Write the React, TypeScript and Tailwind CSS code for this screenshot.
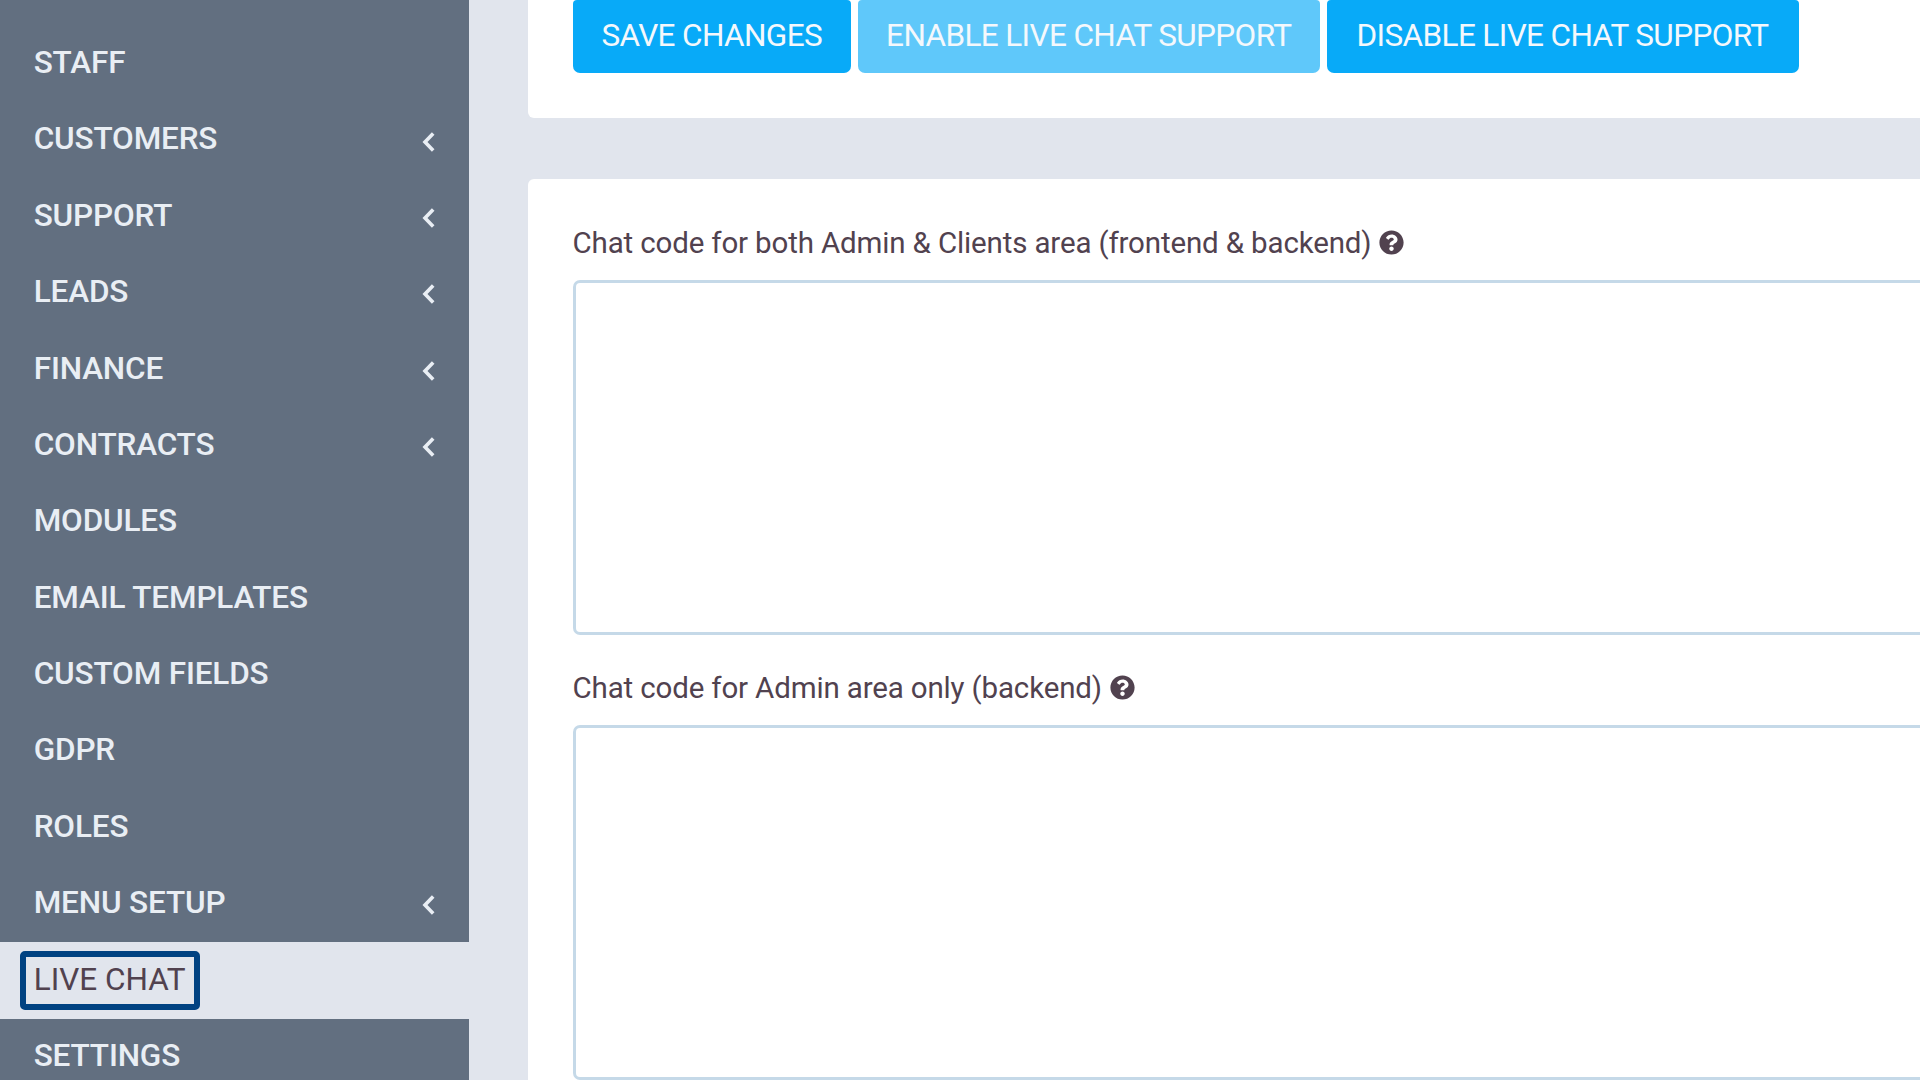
import { FaQuestionCircle } from "react-icons/fa";

type MenuItem = {
  title: string;
  hasChildren?: boolean;
  active?: boolean;
};

const menuItems: MenuItem[] = [
  { title: "STAFF" },
  { title: "CUSTOMERS", hasChildren: true },
  { title: "SUPPORT", hasChildren: true },
  { title: "LEADS", hasChildren: true },
  { title: "FINANCE", hasChildren: true },
  { title: "CONTRACTS", hasChildren: true },
  { title: "MODULES" },
  { title: "EMAIL TEMPLATES" },
  { title: "CUSTOM FIELDS" },
  { title: "GDPR" },
  { title: "ROLES" },
  { title: "MENU SETUP", hasChildren: true },
  { title: "LIVE CHAT", active: true },
  { title: "SETTINGS" },
];

const chatFields = [
  { id: "both", label: "Chat code for both Admin & Clients area (frontend & backend)" },
  { id: "admin", label: "Chat code for Admin area only (backend)" },
];

const Arrow = () => (
  <svg viewBox="0 0 13 20" className="mt-[3px] h-5 w-[13px]" fill="none" stroke="currentColor" strokeWidth="3.6">
    <path d="M11.2 1.6 L3 10 L11.2 18.4" />
  </svg>
);

const Sidebar = () => (
  <aside className="w-[469px] shrink-0 bg-[#626f80] pt-[25.5px]">
    <ul>
      {menuItems.map((item) => (
        <li key={item.title} className={item.active ? "bg-[#e1e5ed]" : ""}>
          <a
            href="#"
            className={`relative flex h-[76.4px] items-center justify-between pr-[34px] pl-[33.7px] text-[31.5px] leading-none ${
              item.active ? "font-normal text-[#51424f]" : "font-medium tracking-[-0.15px] text-[#e9eef4]"
            }`}
          >
            <span className="-mt-[2px]">{item.title}</span>
            {item.hasChildren && <Arrow />}
            {item.active && (
              <span className="absolute top-[9px] left-5 h-[59px] w-[180px] rounded-[5px] border-6 border-[#004282]" />
            )}
          </a>
        </li>
      ))}
    </ul>
  </aside>
);

const Toolbar = () => (
  <div className="flex h-[118px] shrink-0 gap-[6.5px] rounded-bl-md bg-white pl-[44.5px] text-[31.5px] leading-none tracking-[-0.62px] whitespace-nowrap text-[#f4f8fc]">
    <button className="h-[73px] w-[278.5px] rounded-t-[4px] rounded-b-[7px] bg-[#08aaf8] pb-[2px]">SAVE CHANGES</button>
    <button className="h-[73px] w-[462.5px] rounded-t-[4px] rounded-b-[7px] bg-[#5fc8fa] pb-[2px]">ENABLE LIVE CHAT SUPPORT</button>
    <button className="h-[73px] w-[472px] rounded-t-[4px] rounded-b-[7px] bg-[#08aaf8] pb-[2px]">DISABLE LIVE CHAT SUPPORT</button>
  </div>
);

const App = () => (
  <div className="flex h-[1080px] w-[1920px] overflow-hidden bg-[#e1e5ed] font-['Roboto',sans-serif]">
    <Sidebar />
    <main className="ml-[59px] flex flex-1 flex-col gap-[61px]">
      <Toolbar />
      <section className="h-[960px] shrink-0 rounded-tl-md bg-white pt-[44px] pl-[44.5px]">
        {chatFields.map((field) => (
          <div key={field.id} className="mb-[33px]">
            <label
              htmlFor={field.id}
              className="flex h-10 items-center gap-[8px] text-[29.5px] leading-none tracking-[-0.15px] whitespace-nowrap text-[#51424f]"
            >
              <span className="mt-[1px]">{field.label}</span>
              <FaQuestionCircle className="-mt-[1px] size-[25px]" />
            </label>
            <textarea
              id={field.id}
              className="mt-[17px] block h-[355px] w-full resize-none rounded-l-[7px] border-[3px] border-r-0 border-[#c5d9e8] bg-white"
            />
          </div>
        ))}
      </section>
    </main>
  </div>
);

export default App;
